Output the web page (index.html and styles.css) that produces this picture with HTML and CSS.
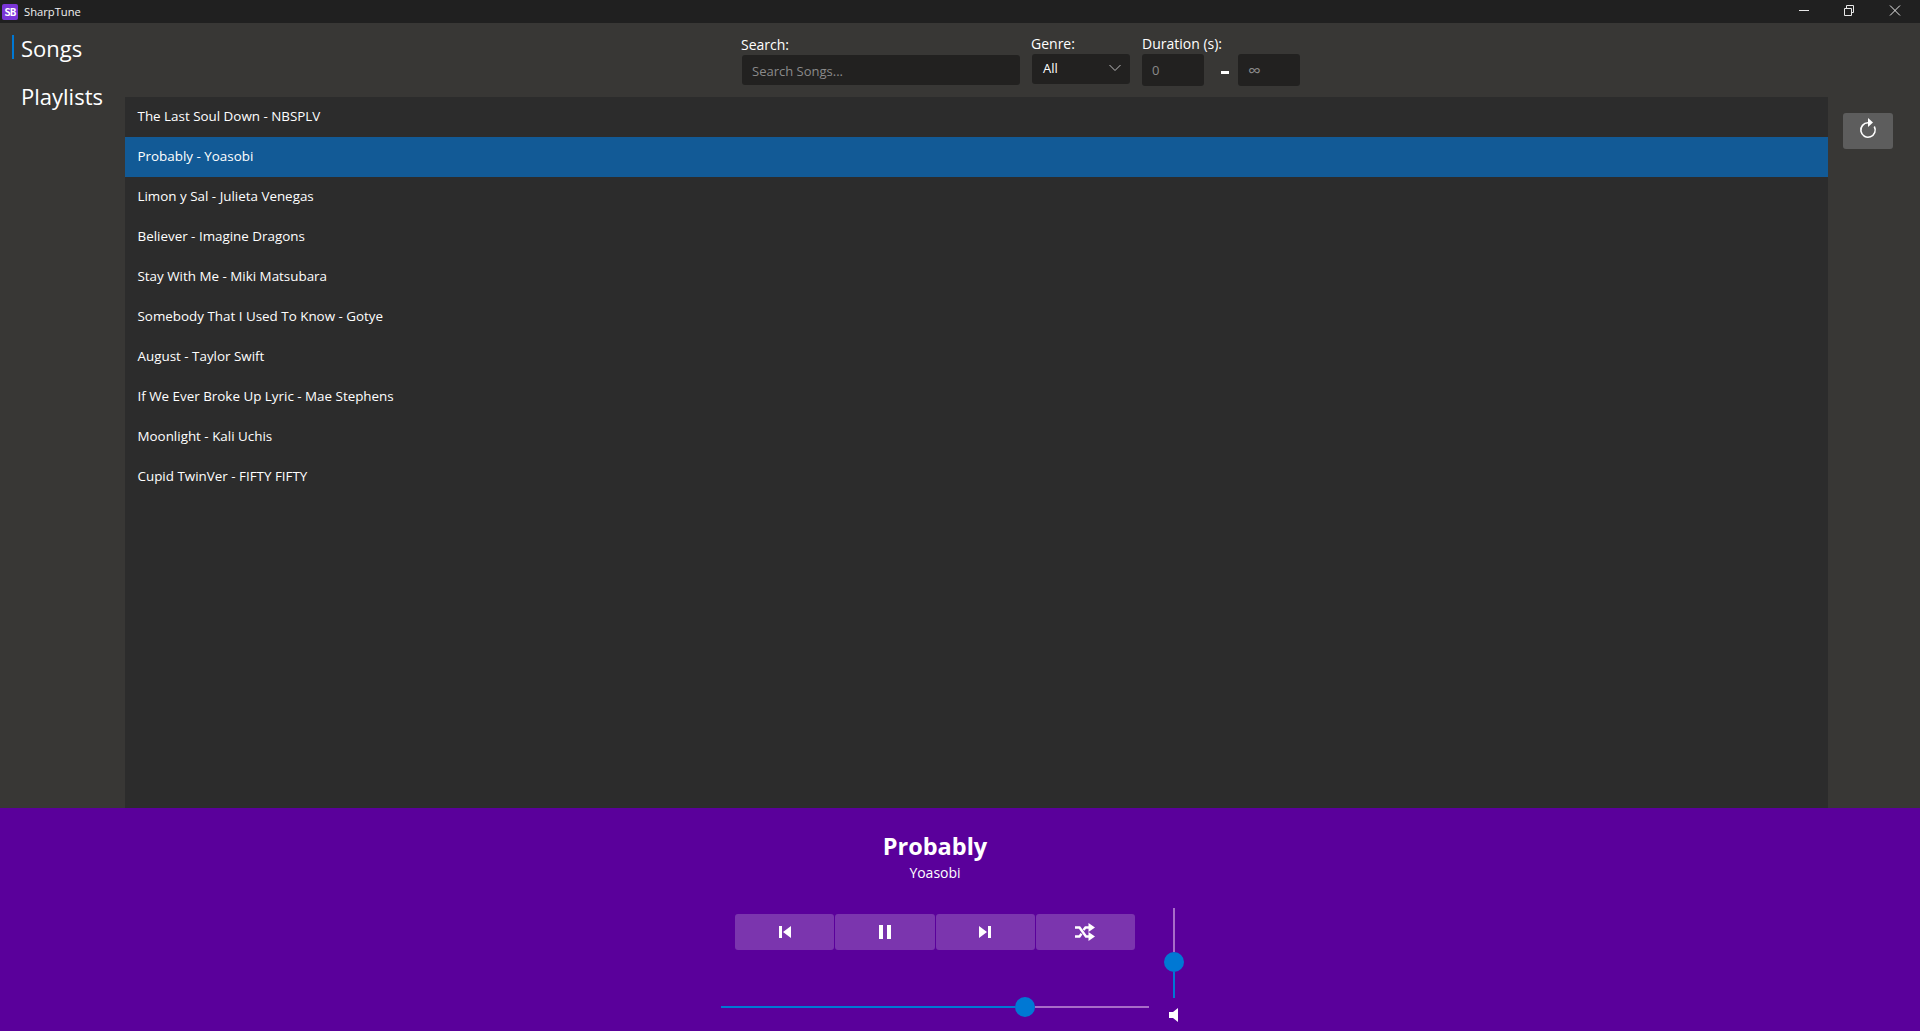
FILE: index.html
```html
<!DOCTYPE html>
<html lang="en">
<head>
    <meta charset="UTF-8">
    <meta name="viewport" content="width=device-width, initial-scale=1.0">
    <title>SharpTune</title>
    <link rel="stylesheet" href="styles.css">
</head>
<body>
    <div class="app">
        <!-- Window title bar -->
        <header class="titlebar">
            <div class="app-icon">SB</div>
            <span class="app-name">SharpTune</span>
            <div class="window-buttons">
                <svg width="46" height="20" viewBox="0 0 46 20"><path d="M19 10.500h10" stroke="#e8e8e8" fill="none"/></svg>
                <svg width="46" height="20" viewBox="0 0 46 20"><path d="M18.500 8.500h7v7h-7z M20.500 8.500v-3h7v7h-2" stroke="#e8e8e8" fill="none"/></svg>
                <svg width="46" height="20" viewBox="0 0 46 20"><path d="M18 5.500l10 10M28 5.500l-10 10" stroke="#e8e8e8" fill="none"/></svg>
            </div>
        </header>

        <main class="main">
            <nav class="sidebar">
                <a class="nav-item active">Songs</a>
                <a class="nav-item">Playlists</a>
            </nav>

            <section class="content">
                <div class="filters">
                    <div class="field search-field">
                        <label>Search:</label>
                        <div class="input search-input">Search Songs...</div>
                    </div>
                    <div class="field genre-field">
                        <label>Genre:</label>
                        <div class="input genre-select">
                            <span>All</span>
                            <svg width="12" height="8" viewBox="0 0 12 8"><path d="M.5 1l5.500 5.500L11.500 1" stroke="#bbb" fill="none"/></svg>
                        </div>
                    </div>
                    <div class="field duration-field">
                        <label>Duration (s):</label>
                        <div class="duration-row">
                            <div class="input num-input">0</div>
                            <span class="dash"></span>
                            <div class="input num-input infinity">∞</div>
                        </div>
                    </div>
                </div>

                <ul class="song-list">
                    <li>The Last Soul Down - NBSPLV</li>
                    <li class="selected">Probably - Yoasobi</li>
                    <li>Limon y Sal - Julieta Venegas</li>
                    <li>Believer - Imagine Dragons</li>
                    <li>Stay With Me - Miki Matsubara</li>
                    <li>Somebody That I Used To Know - Gotye</li>
                    <li>August - Taylor Swift</li>
                    <li>If We Ever Broke Up Lyric - Mae Stephens</li>
                    <li>Moonlight - Kali Uchis</li>
                    <li>Cupid TwinVer - FIFTY FIFTY</li>
                </ul>
            </section>

            <aside class="side-actions">
                <button class="refresh-btn">
                    <svg width="20" height="22" viewBox="0 0 20 22">
                        <path d="M10 5.800A7.200 7.200 0 1 0 16.300 9.500" stroke="#fff" stroke-width="1.600" fill="none"/>
                        <path d="M10 1l5 4.500-5 4.500z" fill="#fff"/>
                    </svg>
                </button>
            </aside>
        </main>

        <footer class="player">
            <div class="player-center">
                <div class="track-title">Probably</div>
                <div class="track-artist">Yoasobi</div>
                <div class="controls">
                    <button class="ctrl-btn">
                        <svg width="12" height="14" viewBox="0 0 12 14"><path d="M0 1h3v12H0zM12 1v12L4 7z" fill="#fff"/></svg>
                    </button>
                    <button class="ctrl-btn">
                        <svg width="12" height="14" viewBox="0 0 12 14"><path d="M0 0h4v14H0zM8 0h4v14H8z" fill="#fff"/></svg>
                    </button>
                    <button class="ctrl-btn">
                        <svg width="12" height="14" viewBox="0 0 12 14"><path d="M0 1v12l8-6zM9 1h3v12H9z" fill="#fff"/></svg>
                    </button>
                    <button class="ctrl-btn">
                        <svg width="20" height="18" viewBox="0 0 20 18"><path d="M0 4.500h4.500l6.500 9h3M0 13.500h4.500l2-2.700M8.500 7L10.500 4.500H14" stroke="#fff" stroke-width="2.400" fill="none"/><path d="M13.500 0l6.500 4.500-6.500 4.500zM13.500 9l6.500 4.500-6.500 4.500z" fill="#fff"/></svg>
                    </button>
                </div>
                <div class="seek-slider">
                    <div class="track-fill" style="width: 294px"></div>
                    <div class="knob"></div>
                    <div class="track-rest"></div>
                </div>
            </div>
            <div class="volume">
                <div class="vol-rest"></div>
                <div class="knob"></div>
                <div class="vol-fill"></div>
                <svg class="vol-icon" width="10" height="14" viewBox="0 0 10 14"><path d="M9 0v14L4 10H0V4h4z" fill="#fff"/></svg>
            </div>
        </footer>
    </div>
</body>
</html>
```

FILE: styles.css
```css
* {
    box-sizing: border-box;
}
html, body {
    margin: 0;
    height: 100%;
}
body {
    font-family: 'Open Sans', 'Noto Sans', sans-serif;
    background-color: #383735;
    color: white;
    overflow: hidden;
}
.app {
    display: flex;
    flex-direction: column;
    height: 1031px;
}

/* Title bar */
.titlebar {
    height: 23px;
    background-color: #202020;
    display: flex;
    align-items: center;
    padding-left: 2px;
    flex-shrink: 0;
}
.app-icon {
    width: 16px;
    height: 16px;
    margin-right: 6px;
    border-radius: 2px;
    background-color: #7a35d8;
    font-family: 'DejaVu Sans Mono', monospace;
    font-size: 10.500px;
    font-weight: 700;
    line-height: 16px;
    letter-spacing: -0.800px;
    text-align: center;
    color: #fff;
}
.app-name {
    font-size: 11.200px;
    color: #f0f0f0;
}
.window-buttons {
    margin-left: auto;
    display: flex;
    align-self: flex-start;
    padding-right: 2px;
}

/* Main area */
.main {
    flex: 1;
    display: flex;
    min-height: 0;
}
.sidebar {
    width: 125px;
    flex-shrink: 0;
    padding-top: 12px;
    display: flex;
    flex-direction: column;
    gap: 24px;
}
.nav-item {
    font-size: 22px;
    line-height: 26px;
    height: 24px;
    padding-left: 7px;
    margin-left: 12px;
    border-left: 2px solid transparent;
    color: #fff;
    font-weight: 400;
}
.nav-item.active {
    border-left-color: #0078d4;
}
.content {
    flex: 1;
    display: flex;
    flex-direction: column;
    min-width: 0;
}
.filters {
    height: 74px;
    flex-shrink: 0;
    display: flex;
    padding-left: 616px;
    padding-top: 11px;
    gap: 11px;
}
.field label {
    display: block;
    font-size: 14px;
    line-height: 20px;
}
.search-field {
    width: 279px;
    padding-top: 1px;
}
.genre-field {
    width: 100px;
}
.input {
    background-color: #222120;
    border-radius: 3px;
    font-size: 13px;
    color: #8a8a8a;
    display: flex;
    align-items: center;
    padding-left: 10px;
}
.search-input {
    width: 278px;
    height: 30px;
    margin-left: 1px;
    padding-top: 2px;
}
.genre-select {
    width: 98px;
    height: 30px;
    margin-left: 1px;
    color: #fff;
    justify-content: space-between;
    padding: 0 9px 2px 11px;
}
.duration-row {
    display: flex;
    align-items: center;
}
.num-input {
    width: 62px;
    height: 32px;
}
.infinity {
    font-size: 18px;
}
.dash {
    width: 8px;
    height: 3px;
    background-color: #fff;
    margin: 5px 9px 0 17px;
}

/* Song list */
.song-list {
    flex: 1;
    margin: 0;
    padding: 0;
    list-style: none;
    background-color: #2c2c2c;
}
.song-list li {
    height: 40px;
    line-height: 39px;
    padding-left: 12.500px;
    font-size: 13.400px;
    color: #fff;
}
.song-list li.selected {
    background-color: #125a96;
}
.side-actions {
    width: 92px;
    flex-shrink: 0;
    padding: 90px 0 0 15px;
}
.refresh-btn {
    width: 50px;
    height: 36px;
    border: none;
    border-radius: 3px;
    background-color: #5d5d5d;
    display: flex;
    align-items: center;
    justify-content: center;
    padding: 0 0 6px;
}

/* Player */
.player {
    height: 223px;
    flex-shrink: 0;
    background-color: #5a009b;
    display: flex;
    padding-left: 721px;
}
.player-center {
    width: 428px;
    display: flex;
    flex-direction: column;
    align-items: center;
    padding-top: 22px;
}
.track-title {
    font-size: 23.500px;
    font-weight: 700;
    line-height: 32px;
}
.track-artist {
    font-size: 14px;
    line-height: 21px;
}
.controls {
    width: 400px;
    display: flex;
    gap: 1px;
    margin-top: 31px;
}
.ctrl-btn {
    flex: 1;
    height: 36px;
    border: none;
    border-radius: 3px;
    background-color: #7b35ae;
    display: flex;
    align-items: center;
    justify-content: center;
    padding: 0 0 1px;
}
.seek-slider {
    width: 428px;
    display: flex;
    align-items: center;
    margin-top: 47px;
}
.track-fill {
    height: 2px;
    background-color: #0078d4;
}
.track-rest {
    flex: 1;
    height: 2px;
    background-color: #a86cc8;
}
.knob {
    width: 20px;
    height: 20px;
    border-radius: 50%;
    background-color: #0078d4;
    flex-shrink: 0;
}
.volume {
    width: 20px;
    margin-left: 15px;
    padding-top: 100px;
    display: flex;
    flex-direction: column;
    align-items: center;
}
.vol-rest {
    width: 2px;
    height: 44px;
    background-color: #a86cc8;
}
.vol-fill {
    width: 2px;
    height: 26px;
    background-color: #0078d4;
}
.vol-icon {
    margin-top: 10px;
}
```
